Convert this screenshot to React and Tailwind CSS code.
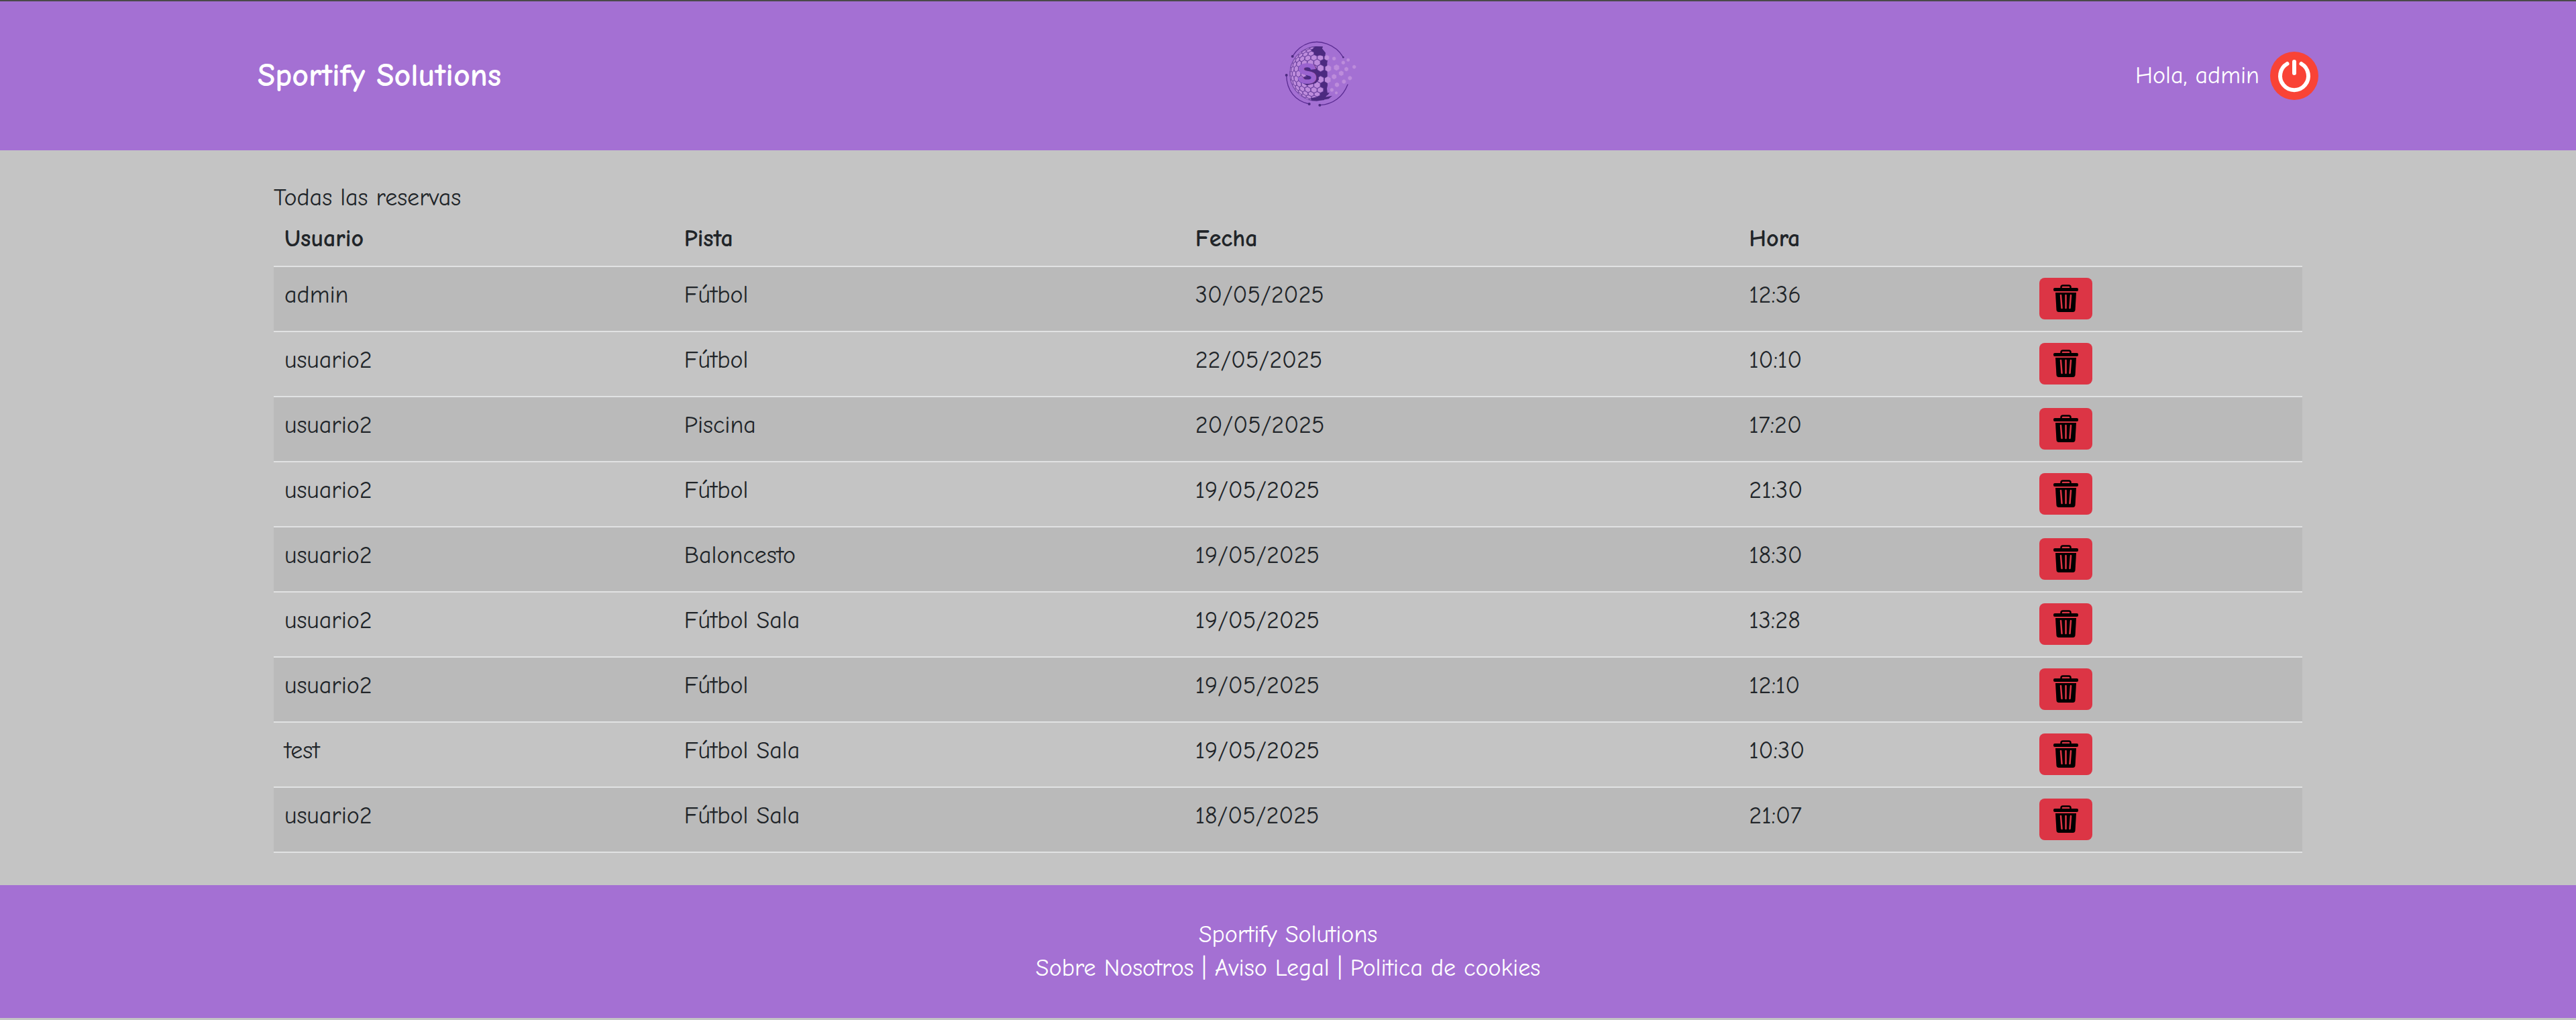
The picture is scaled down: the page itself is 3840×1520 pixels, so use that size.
const reservas = [
  ['admin', 'Fútbol', '30/05/2025', '12:36'],
  ['usuario2', 'Fútbol', '22/05/2025', '10:10'],
  ['usuario2', 'Piscina', '20/05/2025', '17:20'],
  ['usuario2', 'Fútbol', '19/05/2025', '21:30'],
  ['usuario2', 'Baloncesto', '19/05/2025', '18:30'],
  ['usuario2', 'Fútbol Sala', '19/05/2025', '13:28'],
  ['usuario2', 'Fútbol', '19/05/2025', '12:10'],
  ['test', 'Fútbol Sala', '19/05/2025', '10:30'],
  ['usuario2', 'Fútbol Sala', '18/05/2025', '21:07'],
];

// Sphere of hexagons: a flat grid bent round a ball of radius 122.
const CX = 196;
const CY = 210;
const R = 122;

function hexPoints(x, y, size) {
  return Array.from({ length: 6 }, (_, k) => {
    const a = (Math.PI / 3) * k + Math.PI / 6;
    return [x + size * Math.cos(a), y + size * Math.sin(a)];
  });
}

function bend([x, y]) {
  const dx = x - CX;
  const dy = y - CY;
  const d = Math.hypot(dx, dy) || 1;
  const s = (R * Math.sin(Math.min(d / R, Math.PI / 2))) / d;
  return [CX + dx * s, CY + dy * s];
}

const toAttr = (pts) => pts.map((p) => p.map((n) => n.toFixed(1)).join(',')).join(' ');

const ballHexes = [];
for (let row = -7; row <= 7; row++) {
  for (let col = -7; col <= 1; col++) {
    const x = CX + col * 31 + (row % 2 ? 16 : 0);
    const y = CY + row * 26;
    const d = Math.hypot(x - CX, y - CY);
    if (d > R * 1.6 || x > 235) continue;
    const dark =
      (x > 220 && x < 235) ||
      (x > 185 && x < 235 && row === 0) ||
      (x > 175 && row < -3) ||
      (x > 205 && row > 3);
    if (!dark) ballHexes.push(toAttr(hexPoints(x, y, 16.5).map(bend)));
  }
}

const looseHexes = [
  [272, 142, 9], [335, 148, 8], [313, 160, 9], [283, 182, 14], [362, 179, 9],
  [327, 189, 10], [304, 208, 12], [272, 223, 12], [343, 229, 10], [316, 245, 10],
  [285, 259, 11], [262, 282, 9], [282, 295, 7], [246, 186, 15], [244, 237, 15], [240, 138, 12],
];

function Logo() {
  return (
    <svg viewBox="21 39 360 360" className="size-[120px]" role="img" aria-label="Logo de Sportify Solutions">
      <path
        d="M190 87C128 90 78 142 78 210C78 272 124 324 180 330L226 328L243 300L240 276L243 262L241 162L243 150L232 130L234 116L218 96L222 88Z"
        fill="#4c2a80"
      />
      <g fill="#bd8cdc" stroke="#6a3f9e" strokeWidth="2">
        {ballHexes.map((p) => <polygon key={p} points={p} />)}
      </g>
      <path d="M180 93L222 90L217 98L233 119L226 129L203 127L186 119L177 104Z" fill="#4c2a80" />
      <path d="M168 319L215 309L230 296L252 294L245 304L225 315L264 308L248 322L200 331L170 329Z" fill="#4c2a80" />
      <g fill="#bd8cdc" stroke="#a97cd0" strokeWidth="1">
        {looseHexes.map(([x, y, s]) => <polygon key={x + '-' + y} points={toAttr(hexPoints(x, y, s))} />)}
      </g>
      <path d="M132 178Q150 164 186 172L200 196L204 236L190 252L150 262L124 248L132 226L150 222L134 204Z" fill="#4c2a80" />
      <text x="152" y="253" textAnchor="middle" fontSize="128" className="font-['Liberation_Sans',sans-serif] font-bold" fill="#9a63cf" stroke="#9a63cf" strokeWidth="5">S</text>
      <g fill="none" stroke="#5b2c93" strokeWidth="4" strokeLinecap="round">
        <path d="M86 132C128 66 192 58 240 76C274 88 298 110 313 136" />
        <path d="M59 216C60 284 98 332 161 345" />
        <path d="M333 258C312 313 268 346 208 350" />
      </g>
      <g fill="#4c2a80">
        <circle cx="86" cy="132" r="6" />
        <circle cx="313" cy="136" r="4" />
        <circle cx="59" cy="216" r="6" />
        <circle cx="161" cy="345" r="6" />
        <circle cx="208" cy="350" r="6" />
      </g>
    </svg>
  );
}

function PowerIcon() {
  return (
    <svg viewBox="0 0 72 72" className="size-[72px]" aria-hidden="true">
      <circle cx="36" cy="36" r="36" fill="#f94336" />
      <g fill="none" stroke="#fff" strokeWidth="6" strokeLinecap="round">
        <path d="M25.5 18A21 21 0 1 0 46.5 18" />
        <path d="M36 15V32" />
      </g>
    </svg>
  );
}

function TrashIcon() {
  return (
    <svg viewBox="0 0 37 42" className="h-[42px] w-[37px]" aria-hidden="true">
      <path d="M11.5 6V4Q11.5 1.5 14 1.5H23Q25.500 1.5 25.500 4V6" fill="none" stroke="#000" strokeWidth="2.5" />
      <rect x="0" y="5" width="37" height="5" rx="2" />
      <path d="M3 12H34L32.5 38Q32 41 29 41H8Q5 41 4.500 38Z" />
      <g stroke="#dc3545" strokeWidth="2.5" strokeLinecap="round">
        <path d="M11 16L12.5 35M18.5 16V35M26 16L24.5 35" />
      </g>
    </svg>
  );
}

export default function App() {
  return (
    <div className="min-h-screen bg-[#c4c4c4] font-['Comic_Sans_MS','Comic_Neue','Noto_Sans',sans-serif] text-[36px] leading-[48px] text-[#212529]">
      <header className="flex items-center justify-between border-t-2 border-[#4a4a4a] bg-[#a470d3] px-[10%] py-[51px] text-white">
        <a href="#inicio" className="text-[48px] font-bold">Sportify Solutions</a>
        <Logo />
        <div className="flex items-center gap-4">
          <span>Hola, admin</span>
          <button type="button" aria-label="Cerrar sesión" className="rounded-full"><PowerIcon /></button>
        </div>
      </header>

      <main className="mx-[10%] px-6 pt-[50px] pb-12">
        <h1 className="leading-[42px]">Todas las reservas</h1>
        <table className="w-full table-fixed border-collapse text-left">
          <colgroup>
            <col className="w-[19.7%]" />
            <col className="w-[25.2%]" />
            <col className="w-[27.3%]" />
            <col className="w-[14.3%]" />
            <col />
          </colgroup>
          <thead>
            <tr className="border-b-2 border-[#e1e2e3]">
              <th className="p-4">Usuario</th>
              <th className="p-4">Pista</th>
              <th className="p-4">Fecha</th>
              <th className="p-4">Hora</th>
              <td />
            </tr>
          </thead>
          <tbody>
            {reservas.map((fila, i) => (
              <tr key={i} className="h-[97px] border-b-2 border-[#e1e2e3] align-top odd:bg-[#bababa]">
                {fila.map((valor, j) => <td key={j} className="px-4 pt-[18px]">{valor}</td>)}
                <td className="px-4 pt-4">
                  <button type="button" aria-label="Eliminar reserva" className="flex h-[62px] w-[79px] items-center justify-center rounded-lg bg-[#dc3545]">
                    <TrashIcon />
                  </button>
                </td>
              </tr>
            ))}
          </tbody>
        </table>
      </main>

      <footer className="bg-[#a470d3] py-[49px] text-center leading-[50px] text-white">
        <p>Sportify Solutions</p>
        <p>
          <a href="#nosotros">Sobre Nosotros</a> | <a href="#aviso">Aviso Legal</a> | <a href="#cookies">Politica de cookies</a>
        </p>
      </footer>
    </div>
  );
}
